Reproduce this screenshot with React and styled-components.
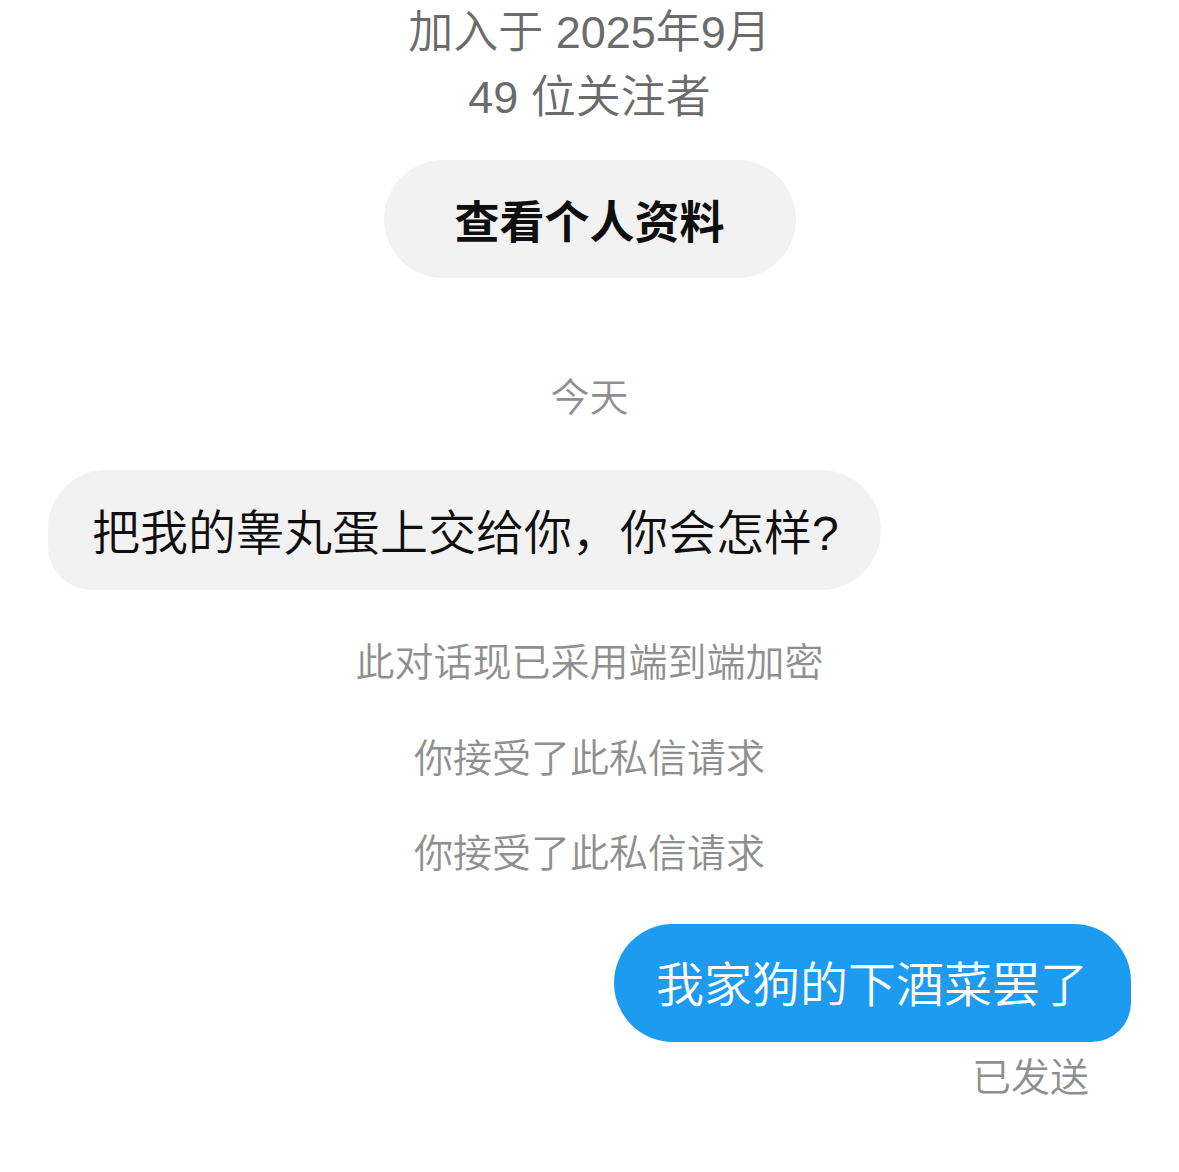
import React from 'react'
import styled, { createGlobalStyle } from 'styled-components'

// Fil de message privé : en-tête du profil puis les bulles

const GlobalStyle = createGlobalStyle`
  html, body {
    margin: 0;
    padding: 0;
    background: #fff;
  }
  body {
    font-family: 'Liberation Sans', 'Noto Sans CJK SC', sans-serif;
  }
`

const Page = styled.div`
  display: flex;
  flex-direction: column;
  align-items: center;
  padding: 0 48px 40px;
  width: 1179px;
  box-sizing: border-box;
`

const ProfileLine = styled.div`
  font-size: 45px;
  line-height: 65px;
  font-weight: 350;
  color: #6b6b6b;
  text-align: center;
`

const ProfileButton = styled.button`
  margin-top: 30px;
  height: 118px;
  width: 412px;
  border: none;
  border-radius: 59px;
  background: #f2f2f2;
  color: #0f0f0f;
  font-family: inherit;
  font-size: 45px;
  font-weight: 700;
  cursor: pointer;
`

const Notice = styled.div`
  margin-top: ${(p) => p.$top}px;
  font-size: 39px;
  line-height: 50px;
  font-weight: 350;
  color: #8f8f8f;
  text-align: center;
`

const Row = styled.div`
  align-self: stretch;
  display: flex;
  flex-direction: column;
  align-items: ${(p) => (p.$mine ? 'flex-end' : 'flex-start')};
  margin-top: ${(p) => (p.$mine ? 45 : 47)}px;
`

const Bubble = styled.div`
  padding: ${(p) => (p.$mine ? '33px 43px 27px 42px' : '35px 42px 27px 44px')};
  font-size: 48px;
  line-height: 58px;
  font-weight: 350;
  white-space: nowrap;
  color: ${(p) => (p.$mine ? '#fff' : '#0f0f0f')};
  background: ${(p) => (p.$mine ? '#1d9bf0' : '#f2f2f2')};
  border-radius: ${(p) => (p.$mine ? '60px 58px 40px 60px' : '58px 60px 60px 44px')};
`

const Status = styled.div`
  margin-top: 11px;
  margin-right: 42px;
  font-size: 39px;
  line-height: 50px;
  font-weight: 350;
  color: #8f8f8f;
`

const App = () => {
  return (
    <>
      <GlobalStyle />
      <Page>
        <ProfileLine>加入于 2025年9月</ProfileLine>
        <ProfileLine>49 位关注者</ProfileLine>
        <ProfileButton>查看个人资料</ProfileButton>

        <Notice $top={95}>今天</Notice>

        <Row>
          <Bubble>把我的睾丸蛋上交给你，你会怎样?</Bubble>
        </Row>

        <Notice $top={48}>此对话现已采用端到端加密</Notice>
        <Notice $top={46}>你接受了此私信请求</Notice>
        <Notice $top={45}>你接受了此私信请求</Notice>

        <Row $mine>
          <Bubble $mine>我家狗的下酒菜罢了</Bubble>
          <Status>已发送</Status>
        </Row>
      </Page>
    </>
  )
}

export default App
